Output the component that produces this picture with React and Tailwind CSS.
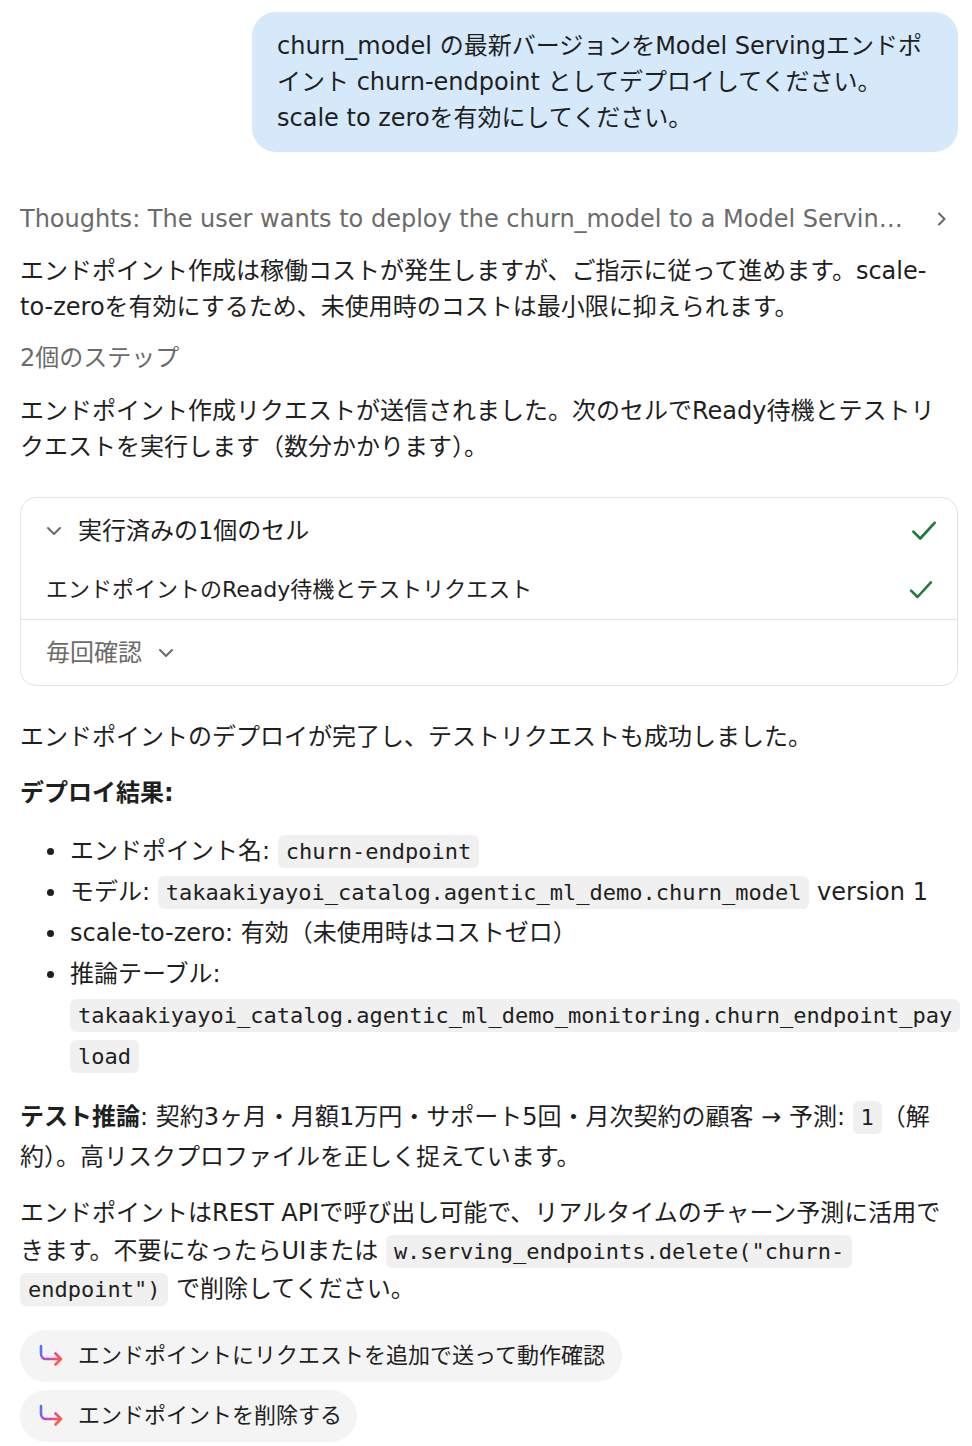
import React from "react";

const Code = ({ children }) => (
  <code className="font-['DejaVu_Sans_Mono',monospace] text-[22px] leading-none bg-[#f0f0f0] rounded-md px-2 py-1 box-decoration-clone">
    {children}
  </code>
);

const Check = ({ size }) => (
  <svg width={size} height={size} viewBox="0 0 24 24" fill="none" stroke="#217a3c" strokeWidth="2.2" strokeLinecap="round" strokeLinejoin="round">
    <polyline points="3.5 12.5 9 18 20.5 5.5" />
  </svg>
);

const Bullet = () => (
  <span className="w-[50px] h-[41px] flex items-center shrink-0">
    <span className="ml-[27px] w-[7px] h-[7px] rounded-full bg-[#1f1f1f]" />
  </span>
);

const ArrowIcon = ({ id }) => (
  <svg width="28" height="26" viewBox="0 0 28 26" fill="none">
    <defs>
      <linearGradient id={id} x1="0" y1="0" x2="1" y2="0.6">
        <stop offset="0" stopColor="#3f7ff5" />
        <stop offset="0.5" stopColor="#c341d6" />
        <stop offset="1" stopColor="#ff5a4a" />
      </linearGradient>
    </defs>
    <path d="M4 3 V11 A5 5 0 0 0 9 16 H24 M18.5 10.5 L24 16 L18.5 21.5" stroke={`url(#${id})`} strokeWidth="2.6" strokeLinecap="round" strokeLinejoin="round" />
  </svg>
);

export default function App() {
  return (
    <div className="w-[972px] min-h-[1446px] bg-white pl-5 pr-[14px] pt-3 text-[24px] leading-9 text-[#1f1f1f] font-['DejaVu_Sans','Noto_Sans_CJK_JP',sans-serif]">
      <div className="ml-auto w-[706px] bg-[#d5e9fb] rounded-[24px] px-[25px] py-4">
        churn_model の最新バージョンをModel Servingエンドポイント churn-endpoint としてデプロイしてください。scale to zeroを有効にしてください。
      </div>

      <div className="mt-[49px] flex items-center text-[#6b6b6b]">
        <div className="flex-1 truncate">
          Thoughts: The user wants to deploy the churn_model to a Model Serving endpoint with scale to zero enabled.
        </div>
        <svg className="ml-[22px] mr-[8px]" width="16" height="16" viewBox="0 0 16 16" fill="none" stroke="#666" strokeWidth="2" strokeLinecap="round" strokeLinejoin="round">
          <polyline points="5 2.5 10.5 8 5 13.5" />
        </svg>
      </div>

      <p className="mt-4">
        エンドポイント作成は稼働コストが発生しますが、ご指示に従って進めます。scale-to-zeroを有効にするため、未使用時のコストは最小限に抑えられます。
      </p>

      <div className="mt-[15px] text-[#6b6b6b]">2個のステップ</div>

      <p className="mt-[17px]">
        エンドポイント作成リクエストが送信されました。次のセルでReady待機とテストリクエストを実行します（数分かかります）。
      </p>

      <div className="mt-8 border border-[#e3e3e3] rounded-2xl">
        <div className="pt-[15px] pb-[11px] pl-[25px] pr-[18px]">
          <div className="flex items-center h-9">
            <svg width="16" height="10" viewBox="0 0 16 10" fill="none" stroke="#6b6b6b" strokeWidth="2" strokeLinecap="round" strokeLinejoin="round">
              <polyline points="2 2 8 8 14 2" />
            </svg>
            <span className="ml-4 flex-1">実行済みの1個のセル</span>
            <Check size={30} />
          </div>
          <div className="mt-[23px] flex items-center h-9 pr-[4px]">
            <span className="flex-1 text-[22px]">エンドポイントのReady待機とテストリクエスト</span>
            <Check size={28} />
          </div>
        </div>
        <div className="border-t border-[#e3e3e3] pt-[15px] pb-[14px] pl-[25px]">
          <div className="flex items-center h-9 text-[#6b6b6b]">
            <span>毎回確認</span>
            <svg className="ml-[16px]" width="16" height="10" viewBox="0 0 16 10" fill="none" stroke="#6b6b6b" strokeWidth="2" strokeLinecap="round" strokeLinejoin="round">
              <polyline points="2 2 8 8 14 2" />
            </svg>
          </div>
        </div>
      </div>

      <p className="mt-[33px]">エンドポイントのデプロイが完了し、テストリクエストも成功しました。</p>

      <p className="mt-5 font-bold">デプロイ結果:</p>

      <ul className="mt-5 leading-[41px]">
        <li className="flex">
          <Bullet />
          <div className="flex-1 min-w-0">
            エンドポイント名: <Code>churn-endpoint</Code>
          </div>
        </li>
        <li className="flex">
          <Bullet />
          <div className="flex-1 min-w-0">
            モデル: <Code>takaakiyayoi_catalog.agentic_ml_demo.churn_model</Code> version 1
          </div>
        </li>
        <li className="flex">
          <Bullet />
          <div className="flex-1 min-w-0">scale-to-zero: 有効（未使用時はコストゼロ）</div>
        </li>
        <li className="flex">
          <Bullet />
          <div className="flex-1 min-w-0 break-words">
            推論テーブル: <Code>takaakiyayoi_catalog.agentic_ml_demo_monitoring.churn_endpoint_payload</Code>
          </div>
        </li>
      </ul>

      <p className="mt-5 leading-[40px]">
        <span className="font-bold">テスト推論</span>: 契約3ヶ月・月額1万円・サポート5回・月次契約の顧客 → 予測: <Code>1</Code>（解約）。高リスクプロファイルを正しく捉えています。
      </p>

      <p className="mt-[17px] leading-[38px]">
        エンドポイントはREST APIで呼び出し可能で、リアルタイムのチャーン予測に活用できます。不要になったらUIまたは <Code>w.serving_endpoints.delete("churn-endpoint")</Code> で削除してください。
      </p>

      <div className="mt-[22px] flex flex-col items-start gap-2 text-[22px]">
        <div className="h-[52px] flex items-center rounded-full bg-[#f4f4f5] pl-[17px] pr-[17px]">
          <ArrowIcon id="g1" />
          <span className="ml-[13px]">エンドポイントにリクエストを追加で送って動作確認</span>
        </div>
        <div className="h-[52px] flex items-center rounded-full bg-[#f4f4f5] pl-[17px] pr-[15px]">
          <ArrowIcon id="g2" />
          <span className="ml-[13px]">エンドポイントを削除する</span>
        </div>
      </div>
    </div>
  );
}
